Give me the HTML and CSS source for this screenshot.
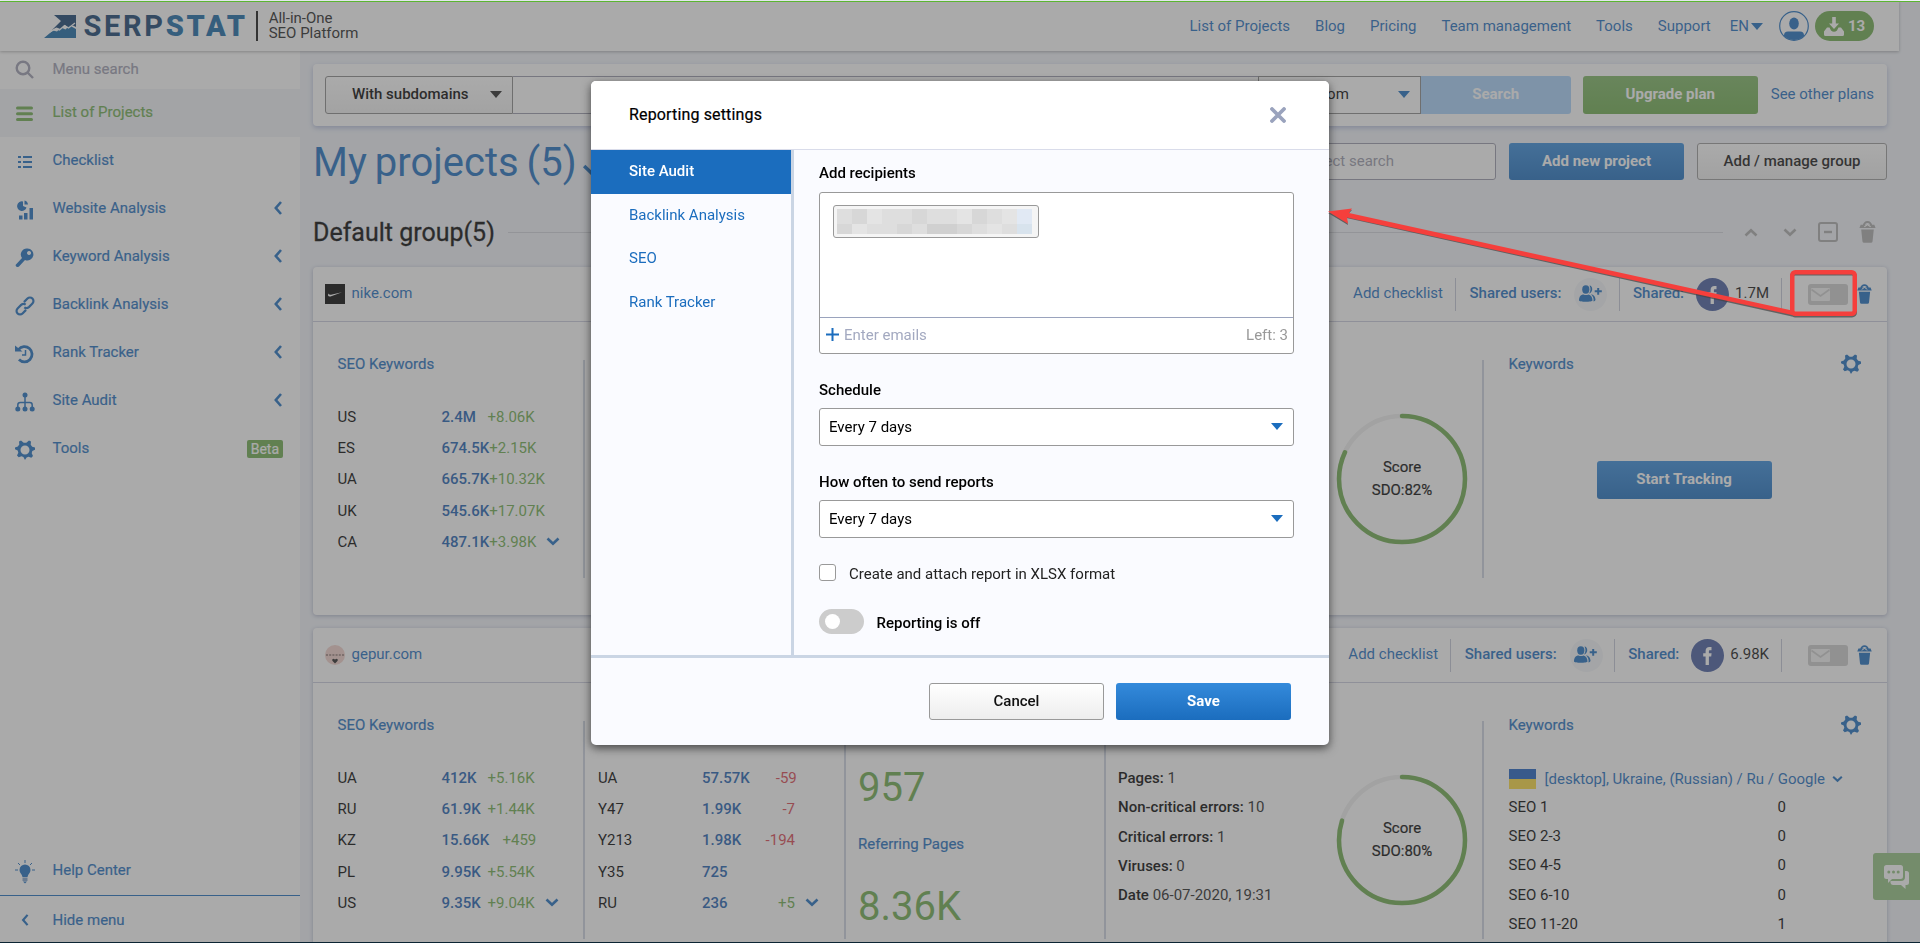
FILE: index.html
```
<!DOCTYPE html>
<html lang="en">
<head>
	<meta charset="UTF-8">
	<title>Serpstat - List of Projects</title>
	<link rel="stylesheet" href="styles.css">
</head>
<body>
<svg class="sprite">
	<symbol id="i-down" viewBox="0 0 14 9"><path d="M1.500 1.500L7 6.800l5.500-5.300" fill="none" stroke="currentColor" stroke-width="2.600"/></symbol>
	<symbol id="i-left" viewBox="0 0 8 14"><path d="M7 1L1.800 7 7 13" fill="none" stroke="currentColor" stroke-width="2.600"/></symbol>
	<symbol id="i-gear" viewBox="0 0 20 20"><path fill="currentColor" fill-rule="evenodd" d="M6 .5l2.700 2.300h2.600L14 .5l2 1-.3 3.300 1.500 2 2.800.7v2.300l-2.700 1.300-.6 2.200 1.300 2.700-1.700 1.700-2.800-1-1.900.9L10 20l-1.600-2.900-1.900-.9-2.800 1L2 15.500l1.300-2.700-.6-2.200L0 9.300V7.500l2.800-.9 1.500-2L4 1.500zM10 5.500a4.500 4.500 0 1 0 0 9 4.500 4.500 0 0 0 0-9z"/></symbol>
	<symbol id="i-trash" viewBox="0 0 16 21"><path d="M4.500 4.500a3.500 3.500 0 0 1 7 0" fill="none" stroke="currentColor" stroke-width="2"/><path fill="currentColor" d="M1.500 3.500h13l1.200 3.200H.3zM2 8h12l-1.200 11.500q-.2 1.300-1.500 1.300H4.700q-1.300 0-1.500-1.300z"/><path d="M5 5.500l3-2 3 2" stroke="#fff" fill="none"/></symbol>
	<symbol id="i-users" viewBox="0 0 24 18"><g fill="currentColor"><ellipse cx="6.800" cy="4.500" rx="3.600" ry="4.200"/><path d="M10.500.5c3.500.2 4 7-.5 8 1.800-2.200 2-5.500.5-8zM0 15.500C0 11.500 2 9.500 4.500 9.500q2.500 1 5 0c2.500.5 4 2.500 4 6 0 1.700-13.500 1.700-13.500 0zM12 9.500c3 0 4.500 2.500 4.500 5.500q-.5 1.200-2 1.500c.5-3-.5-5.500-2.500-7zM18.200 3h2v2.300h2.600v2h-2.600v2.500h-2V7.300h-2.500v-2h2.500z"/></g></symbol>
	<symbol id="i-mail" viewBox="0 0 40 21"><rect width="40" height="21" rx="3" fill="#ccc"/><rect x="3" y="4" width="19" height="13" rx="1" fill="#f2f2f2"/><path d="M3.500 5.500l9 6.500 9-6.500" fill="none" stroke="#ccc" stroke-width="1.600"/></symbol>
	<symbol id="i-fb" viewBox="0 0 33 33"><circle cx="16.500" cy="16.500" r="16.500" fill="#445b9f"/><path d="M14.600 26v-8.500h-2.400v-3.300h2.400v-2.200c0-2.600 1.500-3.900 3.800-3.900h2.100v3.200h-1.400c-1 0-1.200.5-1.200 1.300v1.600h2.700l-.4 3.300h-2.300V26z" fill="#fff"/></symbol>
</svg>

<header class="header">
	<div class="logo">
		<svg width="32" height="23" viewBox="0 0 32 23"><path fill="#123f6e" d="M10 0h22v12l-3-1.500-4 2.500-4-3-4.500 4-4-1.500-5 3L17 6z"/><path fill="#1566a5" d="M0 23l9-7.500 4 1 4-4 4.500 2 4-4L32 14v9z"/><path d="M6 17l6-3.500 3.500 1.500 5-4.500 4 2.500L31 8" fill="none" stroke="#fff" stroke-width="1.300"/></svg>
		<span class="logo-name">SERP<b>STAT</b></span>
		<span class="logo-text">All-in-One<br>SEO Platform</span>
	</div>
	<nav class="nav">
		<a>List of Projects</a><a>Blog</a><a>Pricing</a><a>Team management</a><a>Tools</a><a>Support</a>
		<a class="lang">EN<i class="caret"></i></a>
		<svg class="avatar" width="30" height="30" viewBox="0 0 30 30"><defs><clipPath id="c"><circle cx="15" cy="15" r="14"/></clipPath></defs><circle cx="15" cy="15" r="14.300" fill="none" stroke="#1b6dbe" stroke-width="1.200"/><g fill="#1b6dbe" clip-path="url(#c)"><ellipse cx="15" cy="12.500" rx="4.800" ry="6"/><rect x="5" y="20.500" width="20" height="12" rx="4"/></g></svg>
		<span class="credits"><svg width="20" height="19" viewBox="0 0 20 19"><path fill="#fff" d="M8.200 0h3.600v6.500H15L10 12 5 6.500h3.200zM3 10.500h2.500l1.500 3q3 2.500 6 0l1.500-3H17l3 4v3q0 1.500-1.500 1.500h-17Q0 19 0 17.500v-3z"/></svg>13</span>
	</nav>
</header>

<div class="page">
	<aside class="sidebar">
		<div class="menu-item menu-search"><svg width="20" height="20" viewBox="0 0 20 20"><g fill="none" stroke="currentColor" stroke-width="2.400"><circle cx="8" cy="8" r="6.300"/><path d="M12.500 12.500l5.500 5.500"/></g></svg>Menu search</div>
		<div class="menu-item active"><svg width="20" height="20" viewBox="0 0 20 20"><path d="M2.500 4h14M2.500 9.800h14M2.500 15.500h14" stroke="currentColor" stroke-width="3" stroke-linecap="round"/></svg>List of Projects</div>
		<div class="menu-item"><svg width="20" height="20" viewBox="0 0 20 20"><path d="M3 5h3M8 5h9M3 10h3M8 10h9M3 15h3M8 15h9" stroke="currentColor" stroke-width="2"/></svg>Checklist</div>
		<div class="menu-item"><svg width="20" height="20" viewBox="0 0 20 20"><path fill="currentColor" d="M8 1.500V6l3.500 1.500A4.800 4.800 0 1 1 8 1.500zM9.500.5q3 .5 3.500 4L9.500 4.500zM4 15.500h3.500v4H4zM9 13h3.500v6.500H9zM14.500 8H18v11.500h-3.500z"/></svg>Website Analysis<svg class="arr"><use href="#i-left"/></svg></div>
		<div class="menu-item"><svg width="20" height="20" viewBox="0 0 20 20"><path fill="currentColor" fill-rule="evenodd" d="M12.500.5a6 6 0 1 1-2.500 11.500L4 18.500q-3 1.500-3.500-1.500l6.500-7A6 6 0 0 1 12.500.5zm1.500 2.500a2 2 0 1 0 .1 0z"/></svg>Keyword Analysis<svg class="arr"><use href="#i-left"/></svg></div>
		<div class="menu-item"><svg width="20" height="20" viewBox="0 0 20 20"><g transform="rotate(-45 10 10)" fill="none" stroke="currentColor" stroke-width="2.200"><path d="M8 13.500H3a3.500 3.500 0 0 1 0-7H8q3 .3 3.500 3"/><path d="M12 6.500h5a3.500 3.500 0 0 1 0 7H12q-3-.3-3.500-3"/></g></svg>Backlink Analysis<svg class="arr"><use href="#i-left"/></svg></div>
		<div class="menu-item"><svg width="20" height="20" viewBox="0 0 20 20"><path d="M3.500 5.500A7.600 7.600 0 1 1 4 15.500" fill="none" stroke="currentColor" stroke-width="2.800"/><path d="M0 1.500l7.500 6H0z" fill="currentColor"/><path d="M10.500 6v5H7" fill="none" stroke="currentColor" stroke-width="1.500"/></svg>Rank Tracker<svg class="arr"><use href="#i-left"/></svg></div>
		<div class="menu-item"><svg width="20" height="20" viewBox="0 0 20 20"><g fill="currentColor"><circle cx="10" cy="3" r="2.500"/><circle cx="2.800" cy="17" r="2.500"/><circle cx="10" cy="17" r="2.500"/><circle cx="17.200" cy="17" r="2.500"/></g><path d="M10 3v14M2.800 17v-4q0-2.500 2.500-2.500h9.500q2.400 0 2.400 2.500v4" fill="none" stroke="currentColor" stroke-width="1.500"/></svg>Site Audit<svg class="arr"><use href="#i-left"/></svg></div>
		<div class="menu-item"><svg width="20" height="20"><use href="#i-gear"/></svg>Tools<span class="beta">Beta</span></div>
		<div class="menu-item help"><svg width="20" height="24" viewBox="0 0 20 24"><path d="M10 0v3M3 3l2 2M17 3l-2 2M0 10h3M17 10h3" stroke="currentColor"/><path fill="currentColor" d="M10 4.500a5.500 5.500 0 0 1 5.500 5.500c0 3-2.500 4-3 7h-5c-.5-3-3-4-3-7A5.500 5.500 0 0 1 10 4.500z"/><path fill="#7fa3cc" d="M7.500 17.500h5v3.500h-5z"/><path fill="currentColor" d="M8 21.500h4L10 23.500z"/></svg>Help Center</div>
		<div class="menu-item hide"><svg width="20" height="12"><use href="#i-left"/></svg>Hide menu</div>
	</aside>

	<main class="main">
		<div class="search-panel">
			<div class="select sub">With subdomains<i class="caret"></i></div>
			<div class="search-input"></div>
			<div class="select base">google.com<i class="caret"></i></div>
			<div class="btn search-btn">Search</div>
			<div class="btn green">Upgrade plan</div>
			<a>See other plans</a>
		</div>
		<div class="title-row">
			<h1>My projects (5) <svg width="19" height="12"><use href="#i-down"/></svg></h1>
			<div class="project-search">Project search</div>
			<div class="btn blue">Add new project</div>
			<div class="btn white manage">Add / manage group</div>
		</div>
		<div class="group-row">
			<h2>Default group(5)</h2>
			<div class="rule"></div>
			<svg width="14" height="9" class="up"><use href="#i-down"/></svg>
			<svg width="14" height="9"><use href="#i-down"/></svg>
			<svg width="20" height="20" viewBox="0 0 20 20"><rect x="1" y="1" width="18" height="18" rx="2" fill="none" stroke="currentColor" stroke-width="2"/><path d="M6 10h8" stroke="currentColor" stroke-width="2.400"/></svg>
			<svg width="17" height="22"><use href="#i-trash"/></svg>
		</div>

		<section class="card">
			<div class="card-head">
				<svg width="20" height="20" viewBox="0 0 20 20"><path fill="#000" d="M0 0h20v20H0z"/><path fill="#fff" d="M3.500 9.500q-1.500 3.500 2 3L17 8.300 7 10.500q-2.800.8-3.500-1z"/></svg>
				<a class="domain">nike.com</a>
				<a class="add">Add checklist</a>
				<span class="users">Shared users:<i><svg width="24" height="18"><use href="#i-users"/></svg></i></span>
				<span class="shared">Shared:<svg width="33" height="33"><use href="#i-fb"/></svg><em>1.7M</em></span>
				<svg class="mail" width="40" height="21"><use href="#i-mail"/></svg>
				<svg class="trash" width="15" height="20"><use href="#i-trash"/></svg>
			</div>
			<div class="card-body">
				<div class="col kw">
					<h3>SEO Keywords</h3>
					<p><span>US</span><b>2.4M</b><em>+8.06K</em></p>
					<p><span>ES</span><b>674.5K</b><em>+2.15K</em></p>
					<p><span>UA</span><b>665.7K</b><em>+10.32K</em></p>
					<p><span>UK</span><b>545.6K</b><em>+17.07K</em></p>
					<p><span>CA</span><b>487.1K</b><em>+3.98K</em><svg width="14" height="9"><use href="#i-down"/></svg></p>
				</div>
				<div class="col kw"></div>
				<div class="col links"></div>
				<div class="col audit">
					<div class="gauge"><svg width="132" height="132" viewBox="0 0 132 132"><circle cx="66" cy="66" r="63" pathLength="100"/><circle class="val" cx="66" cy="66" r="63" pathLength="100" stroke-dasharray="82 100"/></svg><span>Score<br>SDO:82%</span></div>
				</div>
				<div class="col rank">
					<h3>Keywords<svg width="20" height="20"><use href="#i-gear"/></svg></h3>
					<div class="btn blue start">Start Tracking</div>
				</div>
			</div>
		</section>

		<section class="card">
			<div class="card-head">
				<svg width="20" height="20" viewBox="0 0 20 20"><circle cx="10" cy="10" r="10" fill="#f0cfc8"/><path d="M1 10h18" stroke="#a58a86" stroke-width="2" stroke-dasharray="2 1.200"/><path fill="#222" d="M10 18.500l-2.700-2.700q-.5-2 1.200-2.100l1.500.8 1.500-.8q1.700.1 1.200 2.100z"/></svg>
				<a class="domain">gepur.com</a>
				<a class="add">Add checklist</a>
				<span class="users">Shared users:<i><svg width="24" height="18"><use href="#i-users"/></svg></i></span>
				<span class="shared">Shared:<svg width="33" height="33"><use href="#i-fb"/></svg><em>6.98K</em></span>
				<svg class="mail" width="40" height="21"><use href="#i-mail"/></svg>
				<svg class="trash" width="15" height="20"><use href="#i-trash"/></svg>
			</div>
			<div class="card-body">
				<div class="col kw">
					<h3>SEO Keywords</h3>
					<p><span>UA</span><b>412K</b><em>+5.16K</em></p>
					<p><span>RU</span><b>61.9K</b><em>+1.44K</em></p>
					<p><span>KZ</span><b>15.66K</b><em>+459</em></p>
					<p><span>PL</span><b>9.95K</b><em>+5.54K</em></p>
					<p><span>US</span><b>9.35K</b><em>+9.04K</em><svg width="14" height="9"><use href="#i-down"/></svg></p>
				</div>
				<div class="col kw">
					<h3></h3>
					<p><span>UA</span><b>57.57K</b><em class="minus">-59</em></p>
					<p><span>Y47</span><b>1.99K</b><em class="minus">-7</em></p>
					<p><span>Y213</span><b>1.98K</b><em class="minus">-194</em></p>
					<p><span>Y35</span><b>725</b></p>
					<p><span>RU</span><b>236</b><em>+5</em><svg width="14" height="9"><use href="#i-down"/></svg></p>
				</div>
				<div class="col links">
					<h3></h3>
					<div class="big">957</div>
					<h3>Referring Pages</h3>
					<div class="big">8.36K</div>
				</div>
				<div class="col audit">
					<div class="facts">
						<p><b>Pages:</b> 1</p>
						<p><b>Non-critical errors:</b> 10</p>
						<p><b>Critical errors:</b> 1</p>
						<p><b>Viruses:</b> 0</p>
						<p><b>Date</b> 06-07-2020, 19:31</p>
					</div>
					<div class="gauge"><svg width="132" height="132" viewBox="0 0 132 132"><circle cx="66" cy="66" r="63" pathLength="100"/><circle class="val" cx="66" cy="66" r="63" pathLength="100" stroke-dasharray="80 100"/></svg><span>Score<br>SDO:80%</span></div>
				</div>
				<div class="col rank">
					<h3>Keywords<svg width="20" height="20"><use href="#i-gear"/></svg></h3>
					<div class="region"><i class="flag"></i>[desktop], Ukraine, (Russian) / Ru / Google<svg width="11" height="8"><use href="#i-down"/></svg></div>
					<p><span>SEO 1</span><span>0</span></p>
					<p><span>SEO 2-3</span><span>0</span></p>
					<p><span>SEO 4-5</span><span>0</span></p>
					<p><span>SEO 6-10</span><span>0</span></p>
					<p><span>SEO 11-20</span><span>1</span></p>
				</div>
			</div>
		</section>
	</main>
</div>

<div class="chat"><svg width="26" height="26" viewBox="0 0 26 26"><path fill="#fff" d="M2.500 1h14Q19 1 19 3.500v9q0 2.500-2.500 2.500H8l-4 4v-4H2.500Q0 15 0 12.500v-9Q0 1 2.500 1z"/><path fill="#fff" d="M21 7h1.500Q25 7 25 9.500v9q0 2.500-2.500 2.500h-1v4l-4.500-4H9q-2 0-2.500-2V17H17q4 0 4-4z"/><g fill="#93c280"><circle cx="4.800" cy="8" r="1.500"/><circle cx="9.500" cy="8" r="1.500"/><circle cx="14.200" cy="8" r="1.500"/></g></svg></div>

<div class="overlay"></div>

<div class="modal">
	<div class="modal-head">Reporting settings<svg width="16" height="16" viewBox="0 0 16 16"><path d="M2 2l12 12M14 2L2 14" stroke="#9aa3bd" stroke-width="3.800" stroke-linecap="round"/></svg></div>
	<div class="modal-body">
		<div class="tabs">
			<a class="on">Site Audit</a>
			<a>Backlink Analysis</a>
			<a>SEO</a>
			<a>Rank Tracker</a>
		</div>
		<div class="form">
			<label>Add recipients</label>
			<div class="recipients">
				<div class="chip"><div class="mosaic"><i></i><i></i><i></i><i></i><i></i><i></i><i></i><i></i><i></i><i></i><i></i><i></i><i></i><i></i><i></i><i></i><i></i><i></i><i></i><i></i><i></i><i></i><i></i><i></i><i></i><i></i></div></div>
				<div class="emails"><svg width="13" height="13" viewBox="0 0 13 13"><path d="M6.500 0v13M0 6.500h13" stroke="#1b6dbe" stroke-width="2"/></svg>Enter emails<span>Left: 3</span></div>
			</div>
			<label>Schedule</label>
			<div class="field">Every 7 days<i class="caret"></i></div>
			<label>How often to send reports</label>
			<div class="field">Every 7 days<i class="caret"></i></div>
			<div class="check"><i></i>Create and attach report in XLSX format</div>
			<div class="toggle"><i></i>Reporting is off</div>
		</div>
	</div>
	<div class="modal-foot">
		<div class="btn white">Cancel</div>
		<div class="btn blue">Save</div>
	</div>
</div>

<!-- pointer from the mail button to the popup -->
<svg class="pointer" width="540" height="120" viewBox="1325 200 540 120">
	<g class="pointer-shadow" transform="translate(0 1.500)"><rect x="1792" y="272" width="63" height="42" rx="3" fill="none" stroke="#444" stroke-width="4"/><path d="M1328 211.500l24-3-4.500 4.800L1792 311v4L1346.500 216.500l1.500 7z" fill="#444"/></g>
	<rect x="1792.250" y="272.250" width="62.500" height="41.500" rx="3" fill="none" stroke="#f53f3c" stroke-width="4.500"/>
	<path d="M1328 211.500l24-3-3 4.500L1792 310.500v4.500L1347 217.500l1 6.200z" fill="#f53f3c"/>
</svg>
</body>
</html>
```
FILE: styles.css
```
*{
	box-sizing:border-box;
}
body{
	margin:0;
	height:943px;
	overflow:hidden;
	background:#f0f3f9;
	font:15px/20px Roboto, "Liberation Sans", sans-serif;
	color:#000;
	display:flex;
	flex-direction:column;
	border-bottom:1px solid #0b2433;
}
h1,h2,h3,p{
	margin:0;
	font-weight:400;
}
i,em{
	font-style:normal;
}
a{
	color:#1b6dbe;
}
.sprite{
	position:absolute;
	width:0;
	height:0;
}
.caret{
	border:6px solid transparent;
	border-top:7px solid #1b6dbe;
	border-bottom:0;
}
/* header */
.header{
	flex:none;
	width:1899px;
	height:50px;
	margin-top:1px;
	background:#fff;
	box-shadow:0 1px 3px rgba(0,0,0,0.3);
	display:flex;
	justify-content:space-between;
	padding:0 25px 0 44px;
	position:relative;
	z-index:2;
}
.header::before{
	content:"";
	position:absolute;
	top:0;
	left:0;
	width:1920px;
	height:1px;
	background:#5cb531;
}
.logo{
	display:flex;
	align-items:center;
}
.logo-name{
	margin-left:7.5px;
	font-size:29px;
	font-weight:700;
	letter-spacing:2.7px;
	color:#123f6e;
}
.logo-name b{
	color:#1566a5;
}
.logo-text{
	border-left:2px solid #111;
	height:30px;
	margin-left:8px;
	padding-left:11px;
	line-height:15px;
	color:#222;
}
.nav{
	display:flex;
	align-items:center;
	gap:25px;
	color:#1b6dbe;
}
.lang{
	display:flex;
	align-items:center;
	gap:2px;
	margin:0 -9px 0 -6px;
}
.credits{
	width:59px;
	height:30px;
	margin-left:-19px;
	border-radius:15px;
	background:#6cab4c;
	color:#fff;
	font-weight:700;
	display:flex;
	align-items:center;
	justify-content:center;
	gap:4px;
}
/* sidebar */
.page{
	flex:1;
	display:flex;
	min-height:0;
}
.sidebar{
	width:300px;
	background:#fff;
	display:flex;
	flex-direction:column;
}
.menu-item{
	flex:none;
	height:48px;
	padding:0 18px 3px 15px;
	display:flex;
	align-items:center;
	color:#1b6dbe;
	-webkit-text-stroke:0.2px;
}
.menu-item svg:first-child{
	margin-right:17.5px;
	position:relative;
	top:2px;
}
.menu-search{
	height:38px;
	padding-bottom:2px;
	color:#9a9aae;
}
.menu-search svg:first-child{
	top:1px;
}
.active{
	background:#f0f3f7;
	color:#6cab4c;
}
.menu-item .arr{
	width:8px;
	height:14px;
	margin-left:auto;
}
.beta{
	margin:0 -1px 0 auto;
	padding:0 4px;
	height:18px;
	line-height:18px;
	border-radius:2px;
	background:#6cab4c;
	color:#fff;
	font-size:14px;
	position:relative;
	top:1px;
}
.help{
	margin-top:auto;
}
.hide{
	border-top:1px solid #1b6dbe;
	height:47px;
	padding-bottom:0;
	padding-top:2px;
}
.hide svg:first-child{
	top:0;
}
/* main */
.main{
	flex:1;
	padding:13px 33px 0 13px;
}
.btn{
	width:175px;
	height:37px;
	line-height:35px;
	border-radius:3px;
	text-align:center;
	font-weight:500;
	color:#fff;
	flex:none;
}
.blue{
	background:linear-gradient(#348adb, #1b6dbe);
	font-weight:700;
	line-height:37px;
}
.green{
	background:linear-gradient(#7cb562, #6cab4c);
	font-weight:700;
}
.white{
	background:linear-gradient(#fff, #ededed);
	border:1px solid #999;
	color:#111;
}
.search-panel{
	height:62px;
	background:#fff;
	border-radius:4px;
	box-shadow:0 2px 5px rgba(60,80,160,0.35);
	padding:12px 13px 12px 12px;
	display:flex;
	line-height:36px;
	white-space:nowrap;
}
.search-panel .btn{
	height:38px;
	line-height:36px;
}
.select{
	border:1px solid #888;
	display:flex;
	align-items:center;
	justify-content:space-between;
	height:38px;
	padding-bottom:2px;
}
.sub{
	width:188px;
	border-radius:3px 0 0 3px;
	background:linear-gradient(#fff, #f0f0f0);
	padding:0 10px 2px 26px;
	font-weight:500;
}
.sub .caret{
	border-top-color:#222;
}
.search-input{
	flex:1;
	border:1px solid #99a;
	border-width:1px 0;
}
.base{
	width:163px;
	padding:0 10px 2px 11px;
}
.search-panel .search-btn{
	width:150px;
	margin-right:12px;
	background:#a6d0fb;
	border-radius:0 3px 3px 0;
	font-weight:700;
}
.search-panel a{
	margin-left:13px;
}
.title-row{
	display:flex;
	margin-top:17px;
	gap:13px;
}
h1{
	flex:1;
	font-size:40px;
	line-height:39px;
	height:37px;
	color:#1b6dbe;
	word-spacing:-2px;
}
h1 svg{
	margin-left:-3px;
}
.project-search{
	width:300px;
	height:37px;
	border:1px solid #99a;
	border-radius:3px;
	background:#fff;
	padding-left:101px;
	line-height:34px;
	color:#99a;
}
.manage{
	width:190px;
}
.group-row{
	display:flex;
	align-items:center;
	margin-top:36px;
	height:32px;
	color:#aaa;
	padding-right:11px;
	gap:21px;
}
h2{
	font-size:25px;
	padding-top:2px;
	color:#000;
	-webkit-text-stroke:0.3px;
}
.rule{
	flex:1;
	height:1px;
	background:#d0d3da;
	margin-left:-8px;
}
.up{
	transform:rotate(180deg);
	margin-right:4px;
}
.card{
	height:348px;
	margin-top:19px;
	background:#fff;
	border-radius:4px;
	box-shadow:0 1px 4px rgba(60,70,120,0.4);
}
.card + .card{
	margin-top:13px;
	height:360px;
}
.card-head{
	height:55px;
	border-bottom:1px solid #c9cbdc;
	padding:0 15px 0 12px;
	display:flex;
	align-items:center;
}
.domain{
	margin:-2px auto 0 6.5px;
}
.add,.users,.shared{
	height:33px;
	line-height:31px;
	padding-right:12px;
	border-right:1px solid #c3c6d6;
}
.users,.shared{
	display:flex;
	padding-left:13.5px;
	color:#1b6dbe;
	font-weight:500;
}
.users{
	padding-right:11.5px;
}
.users i{
	width:33px;
	height:33px;
	margin-left:13px;
	border-radius:50%;
	background:#f3f5f8;
	display:flex;
	align-items:center;
	justify-content:center;
}
.shared{
	padding-left:13px;
}
.shared svg{
	margin:0 6px 0 12px;
}
.shared em{
	font-weight:400;
	color:#111;
}
.mail{
	margin:0 9px 0 26px;
}
.trash{
	color:#1b6dbe;
}
.card-body{
	display:flex;
	height:218px;
	margin-top:38px;
}
.col{
	border-left:2px solid #ccd3e0;
}
.col:first-child{
	border:0;
}
h3{
	height:20px;
	margin-top:-6px;
	font-size:15px;
	line-height:20px;
	color:#1b6dbe;
	-webkit-text-stroke:0.2px;
}
.kw{
	width:261px;
	padding-left:13px;
}
.kw:first-child{
	width:270px;
	padding-left:24.5px;
}
.kw p{
	display:flex;
	align-items:center;
	height:31.3px;
}
.kw h3{
	margin-bottom:27px;
}
.kw p span{
	width:104px;
}
.kw p b{
	min-width:46px;
	font-weight:500;
	color:#1b5eb0;
}
.kw p em{
	min-width:47px;
	text-align:right;
	color:#6cab4c;
}
.kw p .minus{
	color:#d9434f;
}
.kw p svg{
	margin-left:10px;
	color:#1b6dbe;
}
.links{
	width:260px;
	padding-left:12px;
}
.big{
	font-size:40px;
	line-height:48px;
	color:#6cab4c;
	padding-top:29px;
	margin-bottom:28px;
}
.audit{
	width:378px;
	padding:43px 0 0 12px;
	display:flex;
}
.facts p{
	height:29.3px;
	padding-top:4px;
	color:#222;
}
.facts b{
	font-weight:500;
	color:#000;
}
.gauge{
	margin:10px 14px 0 auto;
	width:132px;
	height:132px;
	display:grid;
}
.gauge > *{
	grid-area:1/1;
}
.gauge circle{
	fill:none;
	stroke:#eee;
	stroke-width:4.5;
	transform:rotate(-90deg);
	transform-origin:center;
}
.gauge .val{
	stroke:#6cab4c;
	stroke-linecap:round;
}
.gauge span{
	place-self:center;
	text-align:center;
	line-height:23px;
	-webkit-text-stroke:0.2px;
}
.rank{
	flex:1;
	padding-left:24.5px;
}
.rank h3{
	display:flex;
	justify-content:space-between;
	padding-right:26px;
}
.start{
	margin:87px 0 0 88px;
	height:38px;
}
.region{
	display:flex;
	align-items:center;
	margin-top:34px;
	color:#1b6dbe;
}
.region svg{
	margin-left:7px;
}
.flag{
	width:27px;
	height:20px;
	margin-right:9px;
	background:linear-gradient(#1b5fc0 50%, #fbd93b 50%);
}
.rank p{
	display:flex;
	justify-content:space-between;
	height:29.2px;
	padding:8px 101px 0 0;
}
.chat{
	position:fixed;
	left:1873px;
	top:853px;
	width:47px;
	height:47px;
	border-radius:3px 0 0 3px;
	background:#93c280;
	display:flex;
	align-items:center;
	justify-content:center;
}
.overlay{
	position:fixed;
	top:2px;
	right:0;
	bottom:1px;
	left:0;
	background:rgba(85,85,85,0.5);
	z-index:10;
}
/* popup */
.modal{
	position:fixed;
	left:591px;
	top:81px;
	width:738px;
	height:664px;
	border-radius:5px;
	background:#fafbff;
	box-shadow:0 3px 10px rgba(0,0,0,0.6);
	z-index:11;
	overflow:hidden;
	display:flex;
	flex-direction:column;
}
.modal-head{
	height:69px;
	padding:0 43px 0 38px;
	background:#fff;
	border-bottom:1px solid #d9dcea;
	font-size:16px;
	letter-spacing:0.15px;
	display:flex;
	align-items:center;
	justify-content:space-between;
	-webkit-text-stroke:0.2px;
}
.modal-body{
	flex:1;
	display:flex;
}
.tabs{
	width:203px;
	border-right:3px solid #cad5e4;
}
.tabs a{
	display:block;
	height:43.5px;
	line-height:42px;
	padding-left:38px;
}
.tabs .on{
	background:#1b6dbe;
	color:#fff;
	font-weight:500;
}
.form{
	flex:1;
	padding:13px 35px 0 25px;
}
label{
	display:block;
	font-weight:500;
	height:28px;
}
.recipients{
	height:162px;
	border:1px solid #999;
	border-radius:3px;
	background:#fff;
	margin:1px 0 26px;
	display:flex;
	flex-direction:column;
	justify-content:space-between;
}
.chip{
	width:206px;
	height:33px;
	margin:12px 0 0 13px;
	padding:3px;
	border:1px solid #999;
	border-radius:3px;
	background:#f5f5f5;
}
.mosaic{
	width:195px;
	height:25px;
	display:grid;
	grid-template-columns:repeat(13, 15px);
	grid-template-rows:15px 10px;
}
.mosaic i{
	background:#dedede;
}
.mosaic i:nth-child(3n){
	background:#e4e4e4;
}
.mosaic i:nth-child(4n+2){
	background:#d7d7d7;
}
.mosaic i:nth-child(20),.mosaic i:nth-child(21){
	background:#d0d0d0;
}
.mosaic i:nth-child(13){
	background:#e1e9f4;
}
.mosaic i:nth-child(26){
	background:#d8e3ed;
}
.emails{
	height:36px;
	border-top:1px solid #9aa3bd;
	padding:0 5px 2px 6px;
	display:flex;
	align-items:center;
	gap:5px;
	color:#a3a9c0;
}
.emails span{
	margin-left:auto;
	color:#999;
}
.field{
	height:38px;
	border:1px solid #999;
	border-radius:3px;
	background:#fff;
	padding:0 10px 1px 9px;
	margin-bottom:26px;
	display:flex;
	align-items:center;
	justify-content:space-between;
}
.check{
	display:flex;
	align-items:center;
	gap:13px;
	color:#222;
}
.check i{
	width:17px;
	height:17px;
	margin-bottom:3px;
	border:1px solid #999;
	border-radius:3px;
	background:#fff;
}
.toggle{
	display:flex;
	align-items:center;
	gap:12.5px;
	margin-top:25px;
	font-weight:500;
	line-height:26px;
}
.toggle i{
	width:45px;
	height:25px;
	margin-bottom:2px;
	border-radius:13px;
	background:#ccc;
	padding:5px 6px;
}
.toggle i::before{
	content:"";
	display:block;
	width:15px;
	height:15px;
	border-radius:50%;
	background:#fff;
}
.modal-foot{
	height:90px;
	border-top:3px solid #cad5e4;
	padding:25px 38px 0 0;
	display:flex;
	justify-content:flex-end;
	gap:12px;
}
/* pointer */
.pointer{
	position:fixed;
	left:1325px;
	top:200px;
	z-index:12;
}
.pointer-shadow{
	opacity:0.7;
}
```
